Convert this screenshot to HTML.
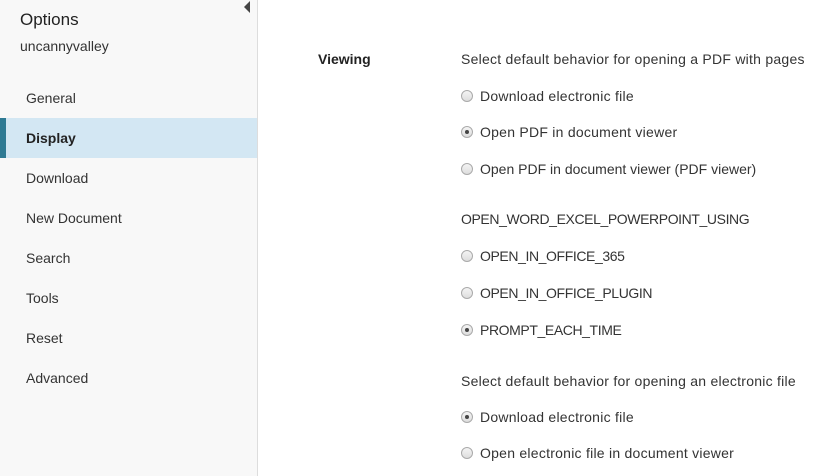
<!DOCTYPE html>
<html><head><style>
body{margin:0;width:820px;height:476px;overflow:hidden;background:#fff;font-family:"Liberation Sans",sans-serif;color:#333;font-size:14px;position:relative}
.side{position:absolute;left:0;top:0;width:257px;height:476px;background:#f8f8f8;border-right:1px solid #ddd}
.t{position:absolute;white-space:nowrap;line-height:16px}
.act{position:absolute;left:0;top:118px;width:257px;height:40px;background:#d3e7f3}
.bar{position:absolute;left:0;top:118px;width:6px;height:40px;background:#2e7a93}
.r{position:absolute;left:461px;width:10px;height:10px;border-radius:50%;border:1px solid #aaa;background:linear-gradient(#f4f4f4,#ddd)}
.r.on::after{content:"";position:absolute;left:3px;top:3px;width:4px;height:4px;border-radius:50%;background:#444}
.w{letter-spacing:0.25px}
.u{letter-spacing:-0.4px}
</style></head><body>
<div class="side"></div>
<div class="act"></div><div class="bar"></div>
<div style="position:absolute;left:244px;top:1px;width:0;height:0;border-top:6px solid transparent;border-bottom:6px solid transparent;border-right:6px solid #444"></div>
<div class="t" style="left:20px;top:12px;font-size:17px;color:#222">Options</div>
<div class="t" style="left:20px;top:38px">uncannyvalley</div>
<div class="t" style="left:26px;top:90px">General</div>
<div class="t" style="left:26px;top:130px;font-weight:bold;color:#222">Display</div>
<div class="t" style="left:26px;top:170px">Download</div>
<div class="t" style="left:26px;top:210px">New Document</div>
<div class="t" style="left:26px;top:250px">Search</div>
<div class="t" style="left:26px;top:290px">Tools</div>
<div class="t" style="left:26px;top:330px">Reset</div>
<div class="t" style="left:26px;top:370px">Advanced</div>
<div class="t" style="left:318px;top:51px;font-weight:bold;color:#222">Viewing</div>
<div class="t w" style="left:461px;top:51px">Select default behavior for opening a PDF with pages</div>
<div class="r" style="top:90px"></div><div class="t w" style="left:480px;top:88px">Download electronic file</div>
<div class="r on" style="top:126px"></div><div class="t w" style="left:480px;top:124px">Open PDF in document viewer</div>
<div class="r" style="top:163px"></div><div class="t" style="left:480px;top:161px">Open PDF in document viewer (PDF viewer)</div>
<div class="t u" style="left:461px;top:211px">OPEN_WORD_EXCEL_POWERPOINT_USING</div>
<div class="r" style="top:250px"></div><div class="t u" style="left:480px;top:248px">OPEN_IN_OFFICE_365</div>
<div class="r" style="top:287px"></div><div class="t u" style="left:480px;top:285px">OPEN_IN_OFFICE_PLUGIN</div>
<div class="r on" style="top:324px"></div><div class="t u" style="left:480px;top:322px">PROMPT_EACH_TIME</div>
<div class="t w" style="left:461px;top:373px">Select default behavior for opening an electronic file</div>
<div class="r on" style="top:411px"></div><div class="t w" style="left:480px;top:409px">Download electronic file</div>
<div class="r" style="top:447px"></div><div class="t w" style="left:480px;top:445px">Open electronic file in document viewer</div>
</body></html>
